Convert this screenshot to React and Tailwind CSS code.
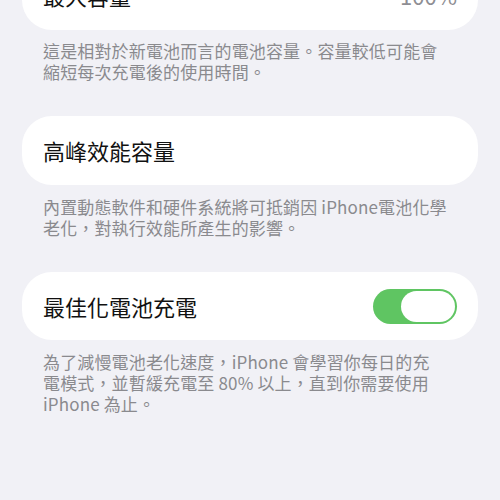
export default function App() {
	return (
		<div className="w-[500px] h-[500px] overflow-hidden bg-[#f1f1f6] font-['Noto_Sans_CJK_TC','Noto_Sans',sans-serif]">
			<div className="-mt-[39px] flex flex-col">
				<div className="mx-[22px] h-[69px] rounded-[30px] bg-white flex items-center justify-between pl-[21px] pr-[21px]">
					<span className="text-[22px] text-[#111]">最大容量</span>
					<span className="text-[22px] text-[#8e8e93]">100%</span>
				</div>
				<div className="px-[43px] pt-[10px] text-[17px] leading-[21px] tracking-[0.15px] text-[#8a8a8e]">
					<div className="whitespace-nowrap">這是相對於新電池而言的電池容量。容量較低可能會</div>
					<div className="whitespace-nowrap">縮短每次充電後的使用時間。</div>
				</div>

				<div className="mt-[34px] mx-[22px] h-[69px] rounded-[30px] bg-white flex items-center pl-[21px] pr-[21px]">
					<span className="text-[22px] text-[#111]">高峰效能容量</span>
				</div>
				<div className="px-[43px] pt-[11px] text-[17px] leading-[21px] tracking-[0.15px] text-[#8a8a8e]">
					<div className="whitespace-nowrap">內置動態軟件和硬件系統將可抵銷因 iPhone電池化學</div>
					<div className="whitespace-nowrap">老化，對執行效能所產生的影響。</div>
				</div>

				<div className="mt-[34px] mx-[22px] h-[68px] rounded-[30px] bg-white flex items-center justify-between pl-[21px] pr-[21px]">
					<span className="text-[22px] text-[#111]">最佳化電池充電</span>
					<div className="w-[84px] h-[35px] rounded-full bg-[#5fc562] flex items-center justify-end p-[2px]">
						<div className="w-[54px] h-[31px] rounded-full bg-white" />
					</div>
				</div>
				<div className="px-[43px] pt-[11px] text-[17px] leading-[21px] tracking-[0.15px] text-[#8a8a8e]">
					<div className="whitespace-nowrap">為了減慢電池老化速度，iPhone 會學習你每日的充</div>
					<div className="whitespace-nowrap">電模式，並暫緩充電至 80% 以上，直到你需要使用</div>
					<div className="whitespace-nowrap">iPhone 為止。</div>
				</div>
			</div>
		</div>
	);
}
